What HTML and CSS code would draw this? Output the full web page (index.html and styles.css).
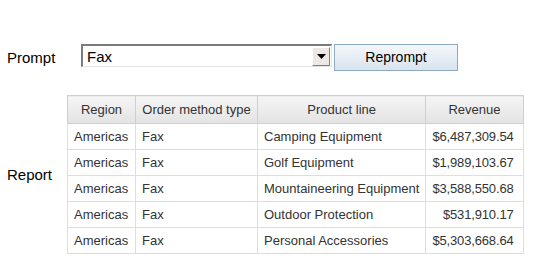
FILE: index.html
```html
<!DOCTYPE html>
<html lang="en">
  <head>
    <meta charset="UTF-8">
    <meta name="viewport" content="width=device-width, initial-scale=1.0">
    <title>Report prompt</title>
    <link rel="stylesheet" href="styles.css">
  </head>
  <body>
    <div class="page">
      <div class="prompt-row">
        <div class="label prompt-label">Prompt</div>
        <div class="select">
          <span class="select-value">Fax</span>
          <span class="select-arrow">
            <svg width="9" height="5" viewBox="0 0 9 5"><polygon points="0,0 9,0 4.5,5" fill="#000"/></svg>
          </span>
        </div>
        <button class="reprompt">Reprompt</button>
      </div>
      <div class="report-row">
        <div class="label report-label">Report</div>
        <table class="report">
          <thead>
            <tr>
              <th class="c-region">Region</th>
              <th class="c-method">Order method type</th>
              <th class="c-product">Product line</th>
              <th class="c-revenue">Revenue</th>
            </tr>
          </thead>
          <tbody>
            <tr><td>Americas</td><td>Fax</td><td>Camping Equipment</td><td class="num">$6,487,309.54</td></tr>
            <tr><td>Americas</td><td>Fax</td><td>Golf Equipment</td><td class="num">$1,989,103.67</td></tr>
            <tr><td>Americas</td><td>Fax</td><td>Mountaineering Equipment</td><td class="num">$3,588,550.68</td></tr>
            <tr><td>Americas</td><td>Fax</td><td>Outdoor Protection</td><td class="num">$531,910.17</td></tr>
            <tr><td>Americas</td><td>Fax</td><td>Personal Accessories</td><td class="num">$5,303,668.64</td></tr>
          </tbody>
        </table>
      </div>
    </div>
  </body>
</html>
```

FILE: styles.css
```css
body {
  margin: 0;
  background: #fff;
  font-family: "Liberation Sans", Arial, sans-serif;
  color: #000;
}
.page { padding: 44px 0 0 7px; }
.label { font-size: 15px; color: #000; }

.prompt-row {
  display: flex;
  align-items: flex-start;
}
.prompt-label {
  width: 74px;
  line-height: 27px;
}
.select {
  box-sizing: border-box;
  display: flex;
  align-items: center;
  justify-content: space-between;
  width: 251px;
  height: 23px;
  border-top: 2px solid #7b7b7b;
  border-left: 2px solid #7b7b7b;
  border-right: 1px solid #e4e4e4;
  border-bottom: 1px solid #e4e4e4;
  background: #fff;
  padding-left: 4px;
}
.select-value { font-size: 15px; color: #000; }
.select-arrow {
  box-sizing: border-box;
  display: flex;
  align-items: center;
  justify-content: center;
  width: 18px;
  height: 19px;
  margin-right: 1px;
  background: #ece9e4;
  border-top: 1px solid #fff;
  border-left: 1px solid #fff;
  border-right: 1px solid #808080;
  border-bottom: 1px solid #808080;
}
.reprompt {
  box-sizing: border-box;
  width: 124px;
  height: 27px;
  margin-left: 2px;
  border: 1px solid #8ea9c2;
  background: linear-gradient(#f4f7fb, #d9e4ef);
  font-family: "Liberation Sans", Arial, sans-serif;
  font-size: 14px;
  color: #000;
  padding: 0 0 2px;
}

.report-row {
  display: flex;
  align-items: center;
  margin-top: 24px;
}
.report-label { width: 60px; }
.report {
  border-collapse: collapse;
  font-size: 13px;
  color: #333;
  border: 1px solid #d4d4d4;
}
.report th {
  height: 27px;
  padding: 0 6px;
  font-weight: normal;
  text-align: center;
  background: linear-gradient(#f5f5f5, #e4e3e3);
  border: 1px solid #cfcfcf;
}
.report td {
  height: 25px;
  padding: 0 6px;
  border: 1px solid #dedede;
  white-space: nowrap;
}
.report td.num {
  text-align: right;
  padding-right: 9px;
  letter-spacing: -0.15px;
}
.c-region { width: 55px; }
.c-method { width: 109px; }
.c-product { width: 154px; }
.c-revenue { width: 80px; }
```
